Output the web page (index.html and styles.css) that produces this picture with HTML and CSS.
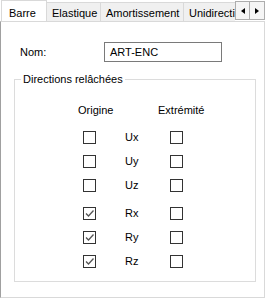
FILE: index.html
```html
<!DOCTYPE html>
<html lang="fr">
  <head>
    <meta charset="UTF-8" />
    <title>Barre</title>
    <link rel="stylesheet" href="styles.css">
  </head>
  <body>
    <div id="window">
      <div class="tabbar">
        <div class="tablist">
          <div class="tab active">Barre</div>
          <div class="tab">Elastique</div>
          <div class="tab">Amortissement</div>
          <div class="tab">Unidirecti</div>
        </div>
        <div class="scroller">
          <span class="arrow left"></span>
          <span class="arrow right"></span>
        </div>
      </div>

      <div class="panel">
        <div class="nameRow">
          <label>Nom:</label>
          <div class="textbox">ART-ENC</div>
        </div>

        <fieldset class="group">
          <legend>Directions relâchées</legend>

          <div class="head">
            <span class="headOrigin">Origine</span>
            <span>Extrémité</span>
          </div>

          <div class="row">
            <span class="check"></span><span class="dir">Ux</span><span class="check"></span>
          </div>
          <div class="row">
            <span class="check"></span><span class="dir">Uy</span><span class="check"></span>
          </div>
          <div class="row">
            <span class="check"></span><span class="dir">Uz</span><span class="check"></span>
          </div>
          <div class="row gapTop">
            <span class="check on"><svg width="11" height="11" viewBox="0 0 11 11"><path d="M2 5.5 L4.5 8 L9.5 2.5" /></svg></span><span class="dir">Rx</span><span class="check"></span>
          </div>
          <div class="row">
            <span class="check on"><svg width="11" height="11" viewBox="0 0 11 11"><path d="M2 5.5 L4.5 8 L9.5 2.5" /></svg></span><span class="dir">Ry</span><span class="check"></span>
          </div>
          <div class="row">
            <span class="check on"><svg width="11" height="11" viewBox="0 0 11 11"><path d="M2 5.5 L4.5 8 L9.5 2.5" /></svg></span><span class="dir">Rz</span><span class="check"></span>
          </div>
        </fieldset>
      </div>
    </div>
  </body>
</html>
```

FILE: styles.css
```css
* {
  padding: 0;
  margin: 0;
  box-sizing: border-box;
}
body {
  background: #ffffff;
  font-family: "Liberation Sans", Arial, sans-serif;
  font-size: 11px;
  color: #000;
}
#window {
  width: 269px;
  height: 299px;
}

/* onglets */
.tabbar {
  display: flex;
  height: 21px;
  padding-left: 1px;
}
.tablist {
  display: flex;
  align-items: flex-end;
  width: 234px;
  overflow: hidden;
}
.tab {
  flex-shrink: 0;
  height: 19px;
  padding: 4px 0 0 5px;
  line-height: 13px;
  white-space: nowrap;
  background: #f0f0f0;
  border: 1px solid #d9d9d9;
  border-bottom: none;
  margin-left: -1px;
}
.tab:nth-child(2) { width: 55px; }
.tab:nth-child(3) { width: 84px; }
.tab:nth-child(4) { width: 56px; }
.tab.active {
  width: 46px;
  height: 22px;
  padding: 6px 0 0 7px;
  background: #fff;
  margin: 0 0 -1px 0;
  position: relative;
  z-index: 1;
}
.scroller {
  display: flex;
  height: 19px;
  margin-top: 1px;
  border: 1px solid #adadad;
  background: #f5f5f5;
}
.arrow {
  width: 14px;
  display: flex;
  align-items: center;
  justify-content: center;
}
.arrow.left {
  border-right: 1px solid #adadad;
}
.arrow::before {
  content: "";
  border-top: 3px solid transparent;
  border-bottom: 3px solid transparent;
}
.arrow.left::before {
  border-right: 4px solid #000;
}
.arrow.right::before {
  border-left: 4px solid #000;
}

/* page */
.panel {
  height: 277px;
  width: 265px;
  border: 1px solid #d9d9d9;
  border-left: 1px solid #a0a0a0;
}
.nameRow {
  display: flex;
  align-items: center;
  margin-top: 20px;
  padding-left: 19px;
}
.nameRow label {
  width: 84px;
}
.textbox {
  width: 118px;
  height: 20px;
  border: 1px solid #7a7a7a;
  padding-left: 5px;
  line-height: 18px;
}

.group {
  margin: 11px 0 0 13px;
  width: 242px;
  height: 209px;
  border: 1px solid #dcdcdc;
  padding: 0;
}
.group legend {
  margin-left: 6px;
  padding: 0 2px;
  line-height: 13px;
}
.head {
  display: flex;
  margin-top: 18px;
  padding-left: 63px;
  line-height: 13px;
}
.headOrigin {
  width: 80px;
}
.row {
  display: flex;
  align-items: center;
  height: 24px;
  padding-left: 68px;
}
.head + .row {
  margin-top: 8px;
}
.row.gapTop {
  margin-top: 4px;
}
.dir {
  width: 45px;
  margin-left: 29px;
}
.check {
  width: 13px;
  height: 13px;
  border: 1px solid #333333;
  background: #fff;
}
.check svg {
  display: block;
}
.check path {
  fill: none;
  stroke: #555555;
  stroke-width: 1.3;
}
```
